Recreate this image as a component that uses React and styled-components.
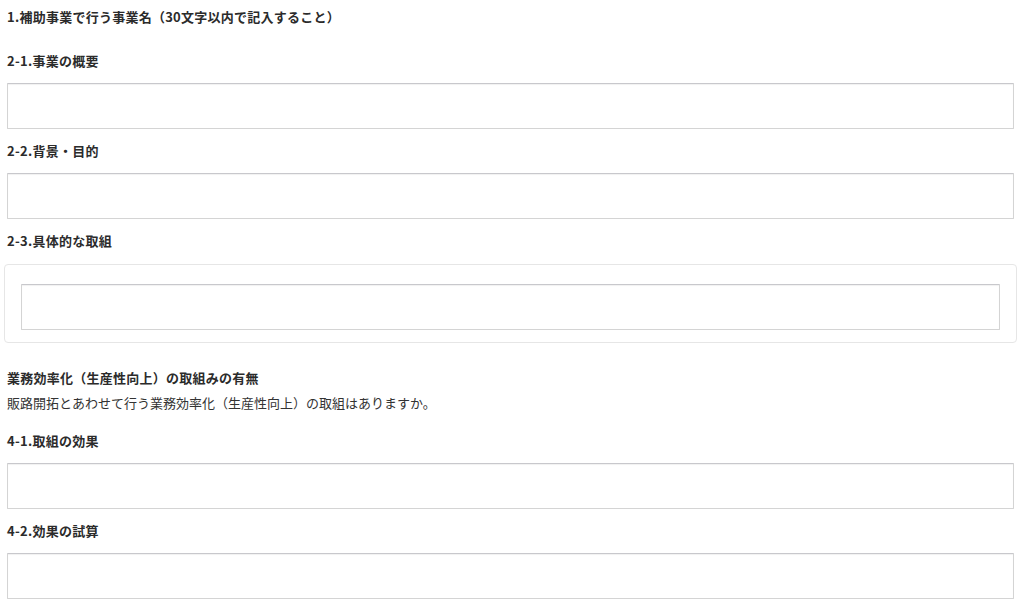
import React from 'react';
import styled, { createGlobalStyle } from 'styled-components';

const GlobalStyle = createGlobalStyle`
    body {
        margin: 0;
        background: #fff;
        font-family: "Noto Sans CJK JP", "Liberation Sans", sans-serif;
        color: #333;
    }
`;

const Page = styled.form`
    padding: 7px 10px 0 7px;
`;

const Group = styled.div`
    margin-bottom: ${(props) => (props.$after === undefined ? 12 : props.$after)}px;
`;

const Label = styled.div`
    font-size: 13px;
    font-weight: 700;
    line-height: 20px;
    letter-spacing: 0.25px;
    color: #2b2b2b;
    margin-bottom: ${(props) => (props.$gap === undefined ? 12 : props.$gap)}px;
`;

const Help = styled.p`
    margin: 0 0 18px;
    font-size: 13px;
    line-height: 20px;
`;

const TextBox = styled.textarea`
    display: block;
    box-sizing: border-box;
    width: 100%;
    height: 46px;
    margin: 0;
    padding: 6px 10px;
    resize: none;
    border: 1px solid #d4d4d4;
    border-top-color: #c8c8cc;
    border-radius: 1px;
    box-shadow: inset 0 1px 1px rgba(0, 0, 0, 0.06);
    font: inherit;
    font-size: 13px;
    background: #fff;
    outline: none;
`;

const Well = styled.div`
    margin: 13px -3px 25px;
    padding: 19px 16px 12px;
    border: 1px solid #e6e6e6;
    border-radius: 4px;
    background: #fff;
`;

function Field({ label, after, children }) {
    return (
        <Group $after={after}>
            <Label>{label}</Label>
            {children === undefined ? <TextBox /> : children}
        </Group>
    );
}

export default function App() {
    return (
        <>
            <GlobalStyle />
            <Page>
                <Field label="1.補助事業で行う事業名（30文字以内で記入すること）" after={24}>
                    {null}
                </Field>
                <Field label="2-1.事業の概要" />
                <Field label="2-2.背景・目的" />
                <Group $after={0}>
                    <Label $gap={0}>2-3.具体的な取組</Label>
                    <Well>
                        <TextBox />
                    </Well>
                </Group>
                <Label $gap={5}>業務効率化（生産性向上）の取組みの有無</Label>
                <Help>販路開拓とあわせて行う業務効率化（生産性向上）の取組はありますか。</Help>
                <Field label="4-1.取組の効果" />
                <Field label="4-2.効果の試算" />
            </Page>
        </>
    );
}
